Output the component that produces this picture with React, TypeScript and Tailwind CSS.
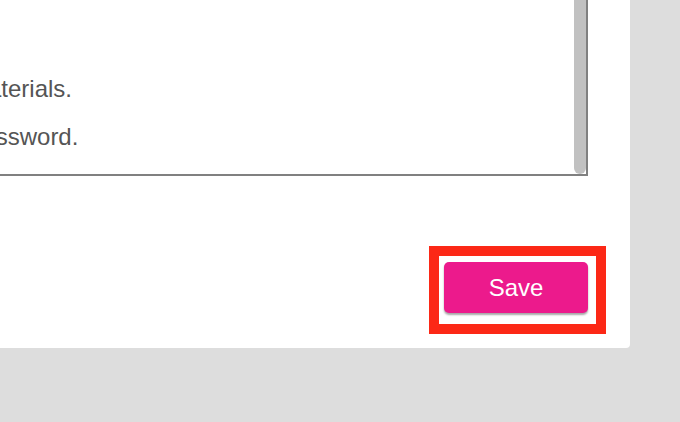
import React from "react";

export default function App() {
  return (
    <div
      className="w-[680px] h-[422px] bg-[#dddddd] overflow-hidden"
      style={{ fontFamily: '"Liberation Sans", Arial, Helvetica, sans-serif' }}
    >
      <div className="w-[630px] h-[348px] bg-white rounded-br-[4px] pr-[42px] flex flex-col items-end">
        <div className="w-full h-[176px] border-r-2 border-b-2 border-[#808080] flex overflow-hidden">
          <div className="flex-1 pt-[65px] overflow-hidden text-[24px] leading-[48px] text-[#555555] whitespace-nowrap">
            <div className="ml-[-32px]">materials.</div>
            <div className="ml-[-31px]">password.</div>
          </div>
          <div className="w-[12px] h-full bg-[#c1c1c1] rounded-b-[6px]" />
        </div>
        <div className="mt-[86px] relative">
          <button className="w-[144px] h-[51px] rounded-[5px] bg-[#ec1a8c] text-white text-[24px] flex items-center justify-center shadow-[0_2px_2px_rgba(0,0,0,0.35)]">
            Save
          </button>
          <div className="absolute left-[-15px] top-[-16px] w-[177px] h-[88px] border-[10px] border-[#fc2816] pointer-events-none" />
        </div>
      </div>
    </div>
  );
}
